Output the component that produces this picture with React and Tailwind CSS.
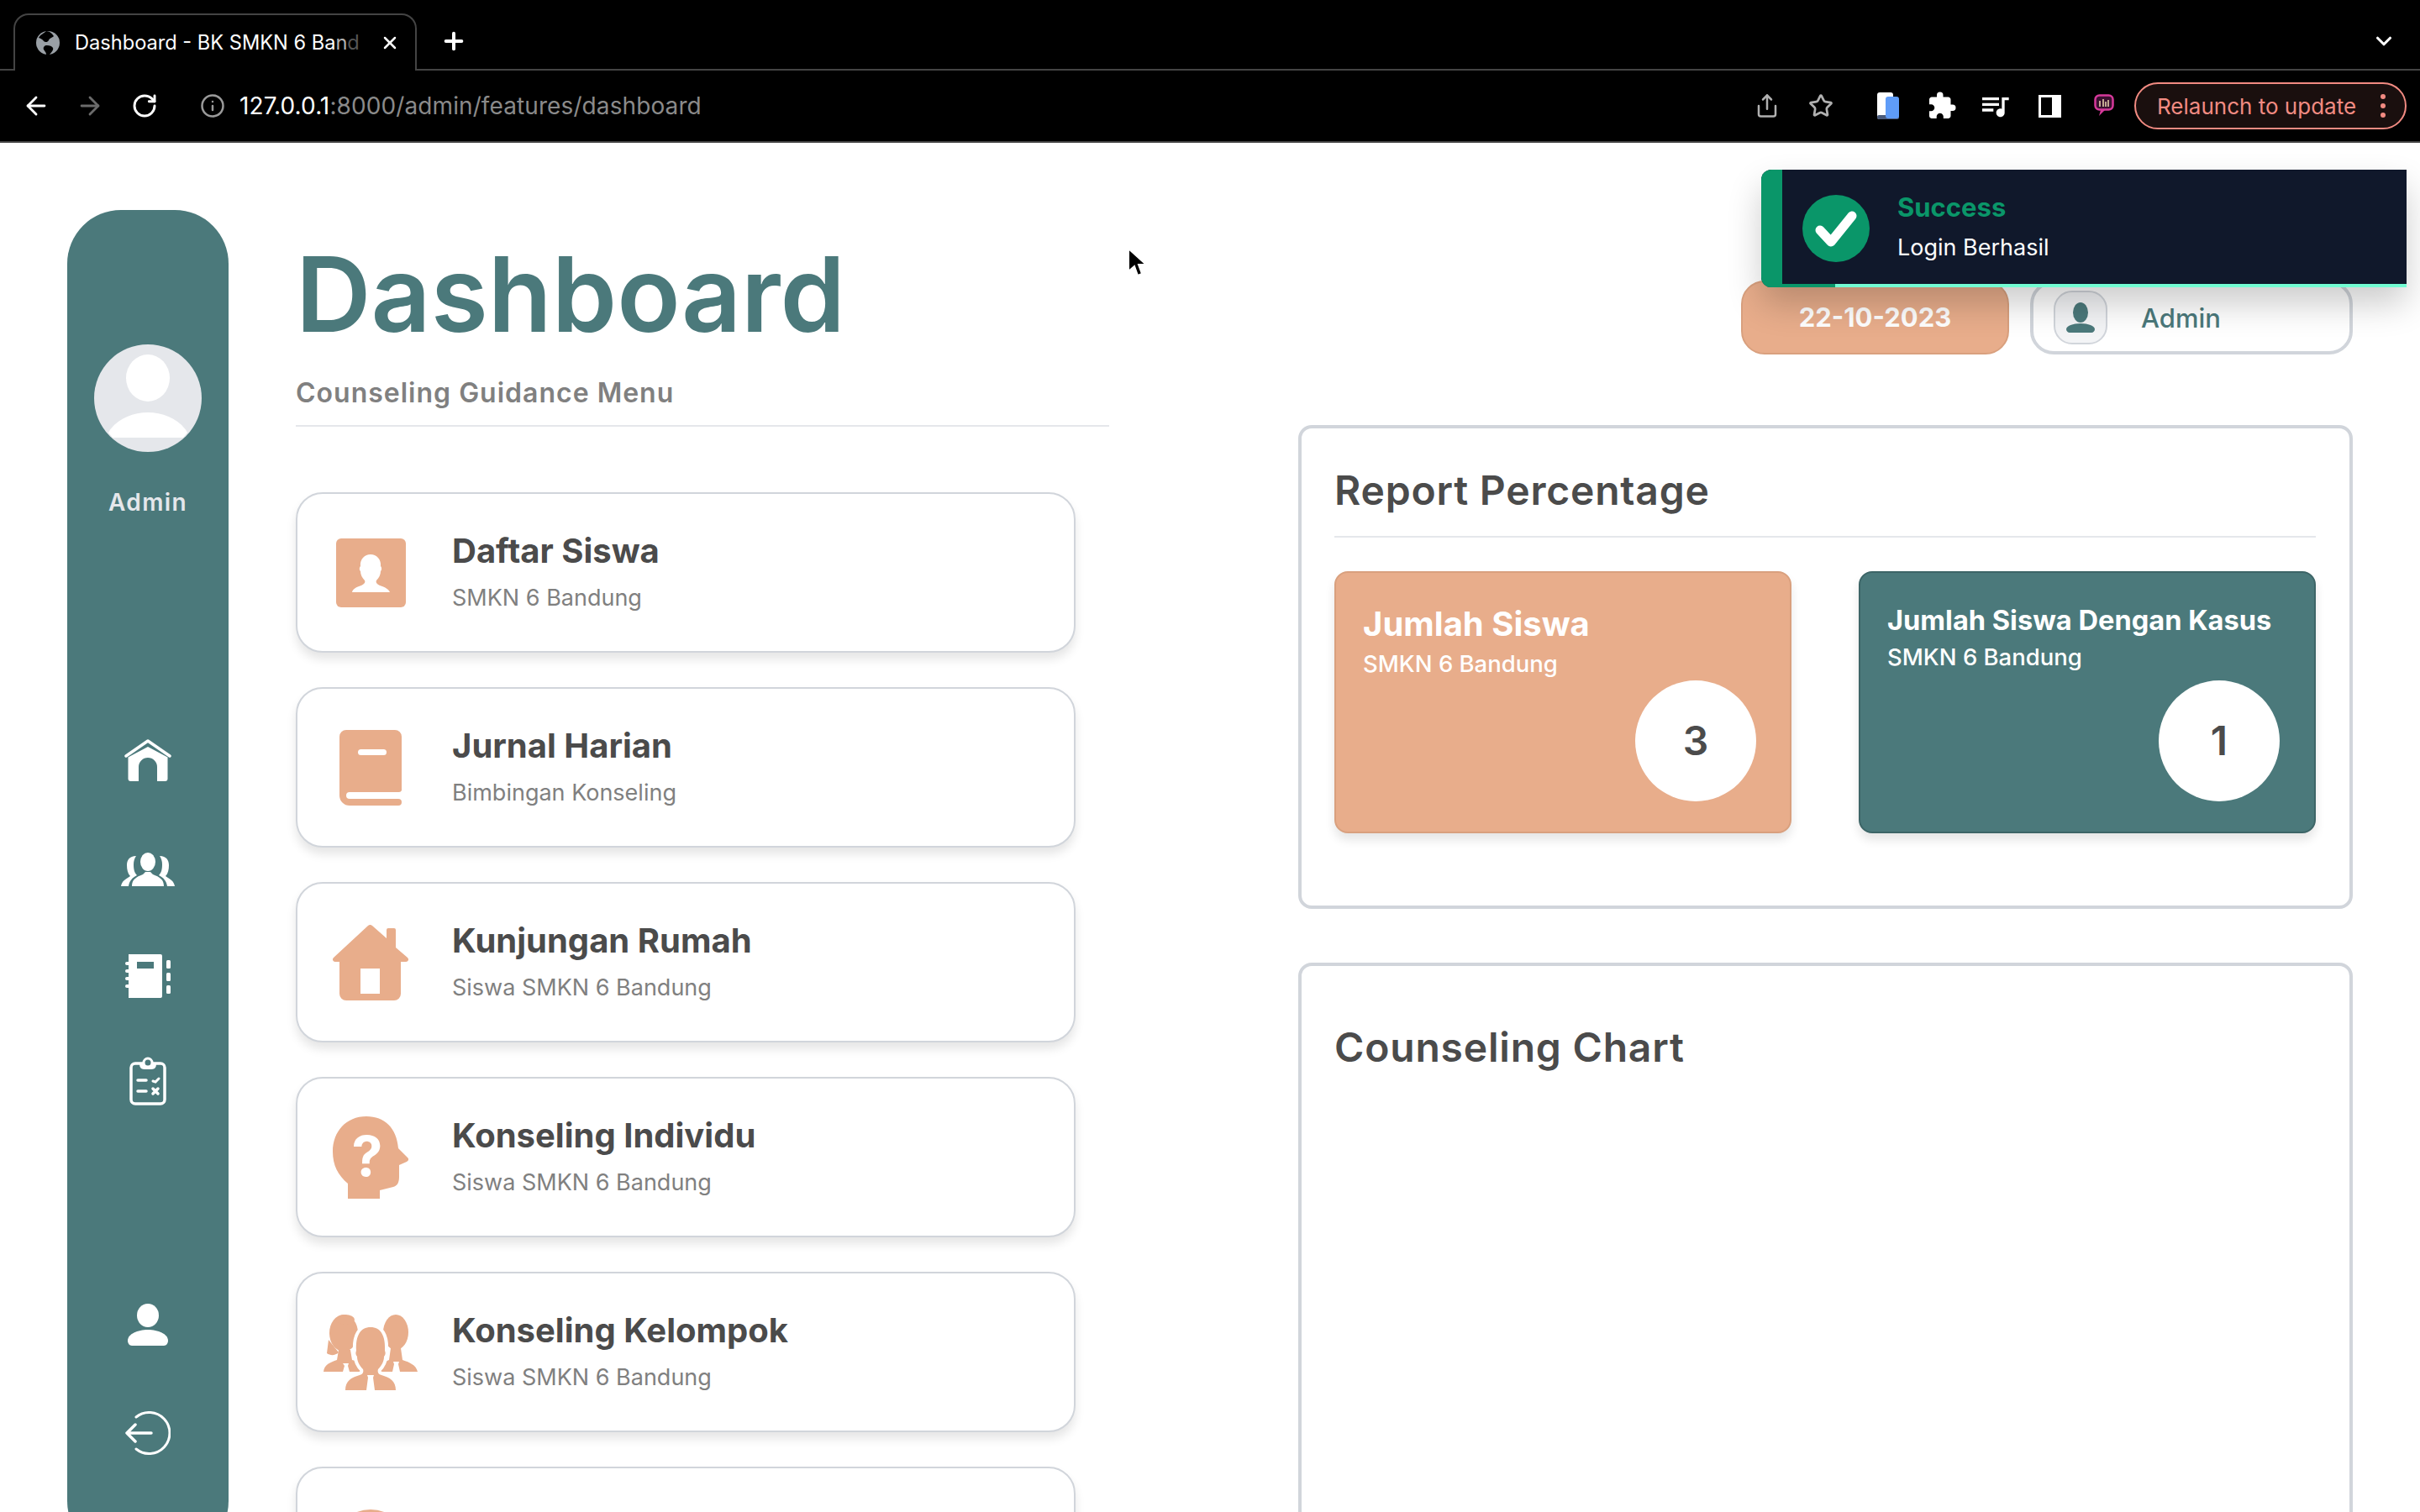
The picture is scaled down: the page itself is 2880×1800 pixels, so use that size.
import React from "react";
import { ArrowLeft, ArrowRight, RotateCw, Info, Star, Share, X, Plus, ChevronDown } from "lucide-react";
import { MdExtension, MdQueueMusic } from "react-icons/md";

const TEAL = "#4b797b";
const PEACH = "#e8ad8b";

// --- sidebar icons ---
const HomeIcon = () => (
  <svg width="56" height="50" viewBox="0 0 56 50" fill="white">
    <path d="M2 20 28 2l26 18" fill="none" stroke="white" strokeWidth="3.5" strokeLinecap="round" strokeLinejoin="round" />
    <path d="M4.500 21.500 28 9l23.500 12.500V47a3 3 0 0 1-3 3H39V33a11 11 0 0 0-22 0v17H7.500a3 3 0 0 1-3-3Z" />
  </svg>
);

const GroupIcon = () => (
  <svg width="64" height="40" viewBox="0 0 64 40" fill="white">
    <ellipse cx="32" cy="11" rx="9" ry="11" />
    <path d="M13 40c0-8 5-11 13-14l3-3h6l3 3c8 3 13 6 13 14Z" />
    <path d="M0 40c1-6 5-8 11-12-3-3-4-8-4-13 0-6 3-11 11-11-2 3-3 6-3 10 0 6 1 10 4 13-6 3-9 7-10 13Z" />
    <path d="M64 40c-1-6-5-8-11-12 3-3 4-8 4-13 0-6-3-11-11-11 2 3 3 6 3 10 0 6-1 10-4 13 6 3 9 7 10 13Z" />
  </svg>
);

const NotebookIcon = () => (
  <svg width="54" height="52" viewBox="0 0 54 52" fill="white">
    <path fillRule="evenodd" d="M4 0h38a2 2 0 0 1 2 2v48a2 2 0 0 1-2 2H4ZM14 9v8h20V9Z" />
    <rect x="0" y="9" width="7" height="4" rx="2" />
    <rect x="0" y="18" width="7" height="4" rx="2" />
    <rect x="0" y="27" width="7" height="4" rx="2" />
    <rect x="0" y="36" width="7" height="4" rx="2" />
    <rect x="49" y="7" width="5" height="10" rx="1.500" />
    <rect x="49" y="22" width="5" height="10" rx="1.500" />
    <rect x="49" y="37" width="5" height="10" rx="1.500" />
  </svg>
);

const ClipboardIcon = () => (
  <svg width="44" height="58" viewBox="0 0 44 58" fill="none" stroke="white" strokeLinecap="round">
    <rect x="2" y="8" width="40" height="48" rx="5" strokeWidth="3.500" />
    <path d="M13 9c0 4 3 5 5 5h8c2 0 5-1 5-5" fill="white" strokeWidth="2" />
    <circle cx="22" cy="7" r="5" fill={TEAL} strokeWidth="3" />
    <path d="M10 28h10M10 41h10" strokeWidth="3.500" />
    <path d="M28 29l3 1 4-4" strokeWidth="3" />
    <path d="M28 38l6 6M34 38l-6 6" strokeWidth="3.500" />
  </svg>
);

const UserIcon = () => (
  <svg width="48" height="50" viewBox="0 0 48 50" fill="white">
    <ellipse cx="24" cy="14" rx="13" ry="14" />
    <path d="M0 44c0-8 12-13 24-13s24 5 24 13c0 3-2 6-5 6H5c-3 0-5-3-5-6Z" />
  </svg>
);

const LogoutIcon = () => (
  <svg width="54" height="52" viewBox="0 0 54 52" fill="none" stroke="white" strokeLinecap="round" strokeLinejoin="round">
    <path d="M13 7A24.500 24.500 0 1 1 13 45" strokeWidth="3" />
    <path d="M31 26H2M12 16 2 26l10 10" strokeWidth="3.500" />
  </svg>
);

// --- card icons ---
const StudentIcon = () => (
  <svg width="83" height="82" viewBox="0 0 83 82">
    <rect width="83" height="82" rx="6" fill={PEACH} />
    <path fill="white" d="M19 64c1-4 5-6 11-8 4-2 5-4 4-6-3-3-5-7-5-11-2-2-1-5 0-6-1-8 5-14 12-14s13 6 12 14c1 1 2 4 0 6 0 4-2 8-5 11-1 2 0 4 4 6 6 2 10 4 12 8Z" />
  </svg>
);

const BookIcon = () => (
  <svg width="74" height="90" viewBox="0 0 74 90">
    <path fill={PEACH} d="M8 0h58a8 8 0 0 1 8 8v64a4 4 0 0 1-3 2H12a4 4 0 0 0 0 8h58a4 4 0 0 1 0 8H12A12 12 0 0 1 0 78V8a8 8 0 0 1 8-8Z" />
    <rect x="22" y="23" width="34" height="7" rx="3.500" fill="white" />
  </svg>
);

const HouseIcon = () => (
  <svg width="90" height="90" viewBox="0 0 90 90">
    <path fill={PEACH} fillRule="evenodd" d="M42 1a4 4 0 0 1 5 0l17 15V6a2 2 0 0 1 2-2h7a2 2 0 0 1 2 2v21l14 12c2 2 1 5-2 5h-6v38a8 8 0 0 1-8 8H16a8 8 0 0 1-8-8V44H3c-3 0-4-3-2-5ZM33 52v30h23V52Z" />
  </svg>
);

const HeadIcon = () => (
  <svg width="90" height="98" viewBox="0 0 90 98">
    <path fill={PEACH} d="M18 98V80C6 70 0 58 0 42 0 18 16 0 40 0c22 0 36 14 38 38l11 11c2 2 1 4-1 5l-9 4v14c0 8-3 11-7 12l-16 4v10Z" />
    <text x="41" y="71" textAnchor="middle" fill="white" fontFamily="Inter, sans-serif" fontWeight="700" fontSize="66">?</text>
  </svg>
);

const TeamIcon = () => (
  <svg width="112" height="90" viewBox="0 0 112 90">
    <g fill={PEACH}>
      {/* left person */}
      <ellipse cx="24" cy="22" rx="17" ry="22" />
      <ellipse cx="26" cy="6" rx="11" ry="6" />
      <path d="M6 30 4 46c4 3 10 3 14-1Z" />
      <path d="M0 68c1-9 8-11 16-14l2-12h14l2 12c8 2 12 5 14 14Z" />
      {/* right person */}
      <ellipse cx="86" cy="21" rx="15" ry="21" />
      <path d="M62 68c2-8 8-11 16-14l2-14h12l2 14c9 3 16 6 18 14Z" />
    </g>
    <path d="M23 58h7l-1 3 2 7h-8l2-7Z" fill="white" />
    <path d="M83 56h7l-1 3 2 9h-9l2-9Z" fill="white" />
    {/* center person, the white stroke cuts it out of the other two */}
    <path
      fill={PEACH}
      stroke="white"
      strokeWidth="8"
      paintOrder="stroke"
      strokeLinejoin="round"
      d="M26 90C26 79 33 75 43 72C47 71 48 68 47 65C43 61 40 56 40 50C38 48 38 45 39 43C38 25 44 15 56 15C68 15 74 25 73 43C74 45 74 48 72 50C72 56 69 61 65 65C64 68 65 71 69 72C79 75 86 79 86 90Z"
    />
    <path d="M52 72h8l-1 3 2 15H51l2-15Z" fill="white" />
  </svg>
);

const Blank = () => <div className="w-[90px] h-[90px] rounded-full bg-[#e8ad8b]" />;

const menu = [
  { title: "Daftar Siswa", sub: "SMKN 6 Bandung", icon: <StudentIcon /> },
  { title: "Jurnal Harian", sub: "Bimbingan Konseling", icon: <BookIcon /> },
  { title: "Kunjungan Rumah", sub: "Siswa SMKN 6 Bandung", icon: <HouseIcon /> },
  { title: "Konseling Individu", sub: "Siswa SMKN 6 Bandung", icon: <HeadIcon /> },
  { title: "Konseling Kelompok", sub: "Siswa SMKN 6 Bandung", icon: <TeamIcon /> },
  { title: "", sub: "", icon: <Blank /> },
];

const TabBar = () => (
  <div className="h-[84px] flex items-end bg-black border-b-2 border-[#444444] text-white">
    <div className="relative ml-[16px] -mb-[2px] w-[480px] h-[68px] flex items-center bg-black border-2 border-b-0 border-[#444444] rounded-t-[18px] pl-[24px] pr-[18px]">
      <svg width="30" height="30" viewBox="0 0 30 30" className="shrink-0">
        <circle cx="15" cy="15" r="14" fill="#9aa0a6" />
        <path fill="#000" d="M13 1c-3 3-7 4-9 8 3 1 5 2 6 4 2 2 5 1 6-1 1-3 4-3 6-5-2-3-5-6-9-6ZM14 18c-3 0-5 2-4 5 1 2 3 3 3 6l4 0c2-3 5-5 4-8-1-2-4-3-7-3Z" />
      </svg>
      <span className="ml-[17px] whitespace-nowrap text-[23.6px]">
        Dashboard - BK SMKN 6 Ba<span className="text-[#b0b0b0]">n</span><span className="text-[#555555]">d</span>
      </span>
      <X size={24} strokeWidth={2.500} className="ml-auto shrink-0" />
    </div>
    <div className="self-center ml-[28px] mt-[16px]">
      <Plus size={32} strokeWidth={3} />
    </div>
    <div className="self-center ml-auto mr-[28px] mt-[16px]">
      <ChevronDown size={30} strokeWidth={2.500} />
    </div>
  </div>
);

const ToolBar = () => (
  <div className="h-[86px] flex items-center bg-black border-b-2 border-[#444444] text-white">
    <ArrowLeft size={34} strokeWidth={2} className="ml-[26px]" />
    <ArrowRight size={34} strokeWidth={2} className="ml-[30px] text-[#6b6b6b]" />
    <RotateCw size={32} strokeWidth={2.200} className="ml-[32px]" />
    <Info size={30} strokeWidth={2} className="ml-[50px] text-[#9a9a9a]" />
    <div className="ml-[17px] text-[28px] tracking-[0.1px] whitespace-nowrap">
      127.0.0.1<span className="text-[#8a8a8a]">:8000/admin/features/dashboard</span>
    </div>
    <div className="ml-auto flex items-center">
      <Share size={30} strokeWidth={2} className="text-[#b0b0b0]" />
      <Star size={30} strokeWidth={2.200} className="ml-[34px] text-[#b0b0b0]" />
      <svg width="26" height="32" viewBox="0 0 26 32" className="ml-[52px]">
        <rect x="0" y="0" width="19" height="32" rx="3" fill="white" />
        <rect x="0" y="27" width="26" height="5" rx="2" fill="#4a5a7a" />
        <rect x="10" y="5" width="16" height="26" rx="3" fill="#5f9cf8" />
      </svg>
      <MdExtension size={36} className="ml-[33px]" />
      <MdQueueMusic size={40} className="ml-[25px]" />
      <div className="ml-[32px] w-[27px] h-[27px] border-y-[3px] border-l-[3px] border-r-[11px] border-white bg-black" />
      <svg width="24" height="28" viewBox="0 0 24 28" className="ml-[39px]">
        <rect x="1.500" y="1.500" width="21" height="17" rx="5" fill="#3a1030" stroke="#d6399a" strokeWidth="2.500" />
        <path d="M8 19l-2 7 7-7" fill="#d6399a" />
        <path d="M7 15V8M11 15V6M14 15V9M17 15V7" stroke="#f0d9b0" strokeWidth="1.500" />
      </svg>
      <div className="ml-[24px] mr-[16px] w-[324px] h-[56px] flex items-center rounded-full border-2 border-[#f28b82] bg-[#1a0f0e] pl-[25px] text-[#f28b82] text-[26px]">
        <span className="whitespace-nowrap">Relaunch to update</span>
        <div className="ml-auto mr-[23px] flex flex-col gap-[5px]">
          <div className="w-[6px] h-[6px] rounded-full bg-[#f28b82]" />
          <div className="w-[6px] h-[6px] rounded-full bg-[#f28b82]" />
          <div className="w-[6px] h-[6px] rounded-full bg-[#f28b82]" />
        </div>
      </div>
    </div>
  </div>
);

const Sidebar = () => (
  <aside className="ml-[80px] mt-[80px] w-[192px] h-[1601px] shrink-0 rounded-[64px] bg-[#4b797b] flex flex-col items-center pt-[160px]">
    <svg width="128" height="128" viewBox="0 0 128 128">
      <circle cx="64" cy="64" r="64" fill="#e5e7eb" />
      <ellipse cx="64" cy="40" rx="26" ry="28" fill="white" />
      <path fill="white" d="M17 105C25 90 45 81 64 81s39 9 47 24l-5 6H22Z" />
    </svg>
    <div className="mt-[42px] h-[36px] leading-[36px] text-[28px] font-semibold tracking-[1.4px] text-[#e5e7eb]">Admin</div>
    <div className="mt-[264px]"><HomeIcon /></div>
    <div className="mt-[85px]"><GroupIcon /></div>
    <div className="mt-[81px]"><NotebookIcon /></div>
    <div className="mt-[70px]"><ClipboardIcon /></div>
    <div className="mt-[236px]"><UserIcon /></div>
    <div className="mt-[78px]"><LogoutIcon /></div>
  </aside>
);

const MenuCard = ({ title, sub, icon }) => (
  <div className="w-[928px] h-[191px] shrink-0 flex items-center rounded-[32px] border-2 border-[#d1d5db] bg-white shadow-[0_8px_12px_rgba(0,0,0,0.1)] pl-[31px]">
    <div className="w-[112px] flex justify-center">{icon}</div>
    <div className="ml-[41px]">
      <div className="h-[50px] leading-[50px] text-[40px] font-bold text-[#4b4b4b]">{title}</div>
      <div className="mt-[11px] h-[40px] leading-[40px] text-[27px] text-[#808080]">{sub}</div>
    </div>
  </div>
);

const StatCard = ({ bg, titleCls, subCls, title, sub, value, circleCls }) => (
  <div className={bg}>
    <div className={titleCls}>{title}</div>
    <div className={subCls}>{sub}</div>
    <div className={circleCls}>{value}</div>
  </div>
);

export default function App() {
  return (
    <div className="relative w-[2880px] h-[1800px] overflow-hidden bg-white font-['Inter',sans-serif]">
      <TabBar />
      <ToolBar />

      <main className="flex">
        <Sidebar />

        <section className="ml-[80px] w-[968px] shrink-0 pt-[118px]">
          <h1 className="h-[124px] leading-[124px] text-[124px] font-semibold text-[#4b797b] whitespace-nowrap">Dashboard</h1>
          <div className="mt-[36px] h-[40px] leading-[40px] text-[32px] font-semibold tracking-[1px] text-[#808080]">Counseling Guidance Menu</div>
          <div className="mt-[18px] h-[2px] bg-[#e5e7eb]" />
          <div className="mt-[78px] flex flex-col gap-[41px]">
            {menu.map((m, i) => (
              <MenuCard key={i} {...m} />
            ))}
          </div>
        </section>

        <section className="ml-[225px] w-[1255px] shrink-0 pt-[164px]">
          <div className="flex justify-end gap-[25px]">
            <div className="w-[319px] h-[88px] flex items-center justify-center rounded-[28px] border-2 border-[#d9a07e] bg-[#e8ad8b] text-[31px] font-bold text-white">22-10-2023</div>
            <div className="w-[384px] h-[88px] flex items-center rounded-[28px] border-4 border-[#d1d5db] bg-white pl-[24px]">
              <div className="w-[64px] h-[64px] flex items-center justify-center rounded-[22px] border-2 border-[#d1d5db] bg-[#f3f4f6]">
                <svg width="34" height="36" viewBox="0 0 34 36" fill="#4b797b">
                  <ellipse cx="17" cy="12" rx="9" ry="12" />
                  <path d="M0 32c0-4 8-7 17-7s17 3 17 7c0 2-2 4-4 4H4c-2 0-4-2-4-4Z" />
                </svg>
              </div>
              <div className="ml-[40px] pt-[2px] text-[31px] font-medium text-[#4b797b]">Admin</div>
            </div>
          </div>

          <div className="mt-[84px] h-[576px] rounded-[16px] border-4 border-[#d1d5db] pl-[39px] pr-[40px] pt-[44px]">
            <div className="h-[60px] leading-[60px] text-[48px] font-semibold tracking-[0.8px] text-[#4b4b4b]">Report Percentage</div>
            <div className="mt-[24px] h-[2px] bg-[#e5e7eb]" />
            <div className="mt-[40px] grid grid-cols-[544px_544px] gap-x-[80px]">
              <StatCard
                bg="h-[312px] flex flex-col rounded-[16px] border-2 border-[#d9a07e] bg-[#e8ad8b] pt-[36px] pl-[32px] text-white shadow-[0_8px_12px_rgba(0,0,0,0.1)]"
                titleCls="pt-[1px] h-[48px] leading-[48px] text-[40px] font-bold"
                subCls="mt-[6px] h-[36px] leading-[36px] text-[27.5px] font-medium"
                circleCls="mt-[2px] mr-[40px] self-end w-[144px] h-[144px] flex items-center justify-center rounded-full bg-white text-[48px] font-semibold text-[#4b4b4b]"
                title="Jumlah Siswa"
                sub="SMKN 6 Bandung"
                value="3"
              />
              <StatCard
                bg="h-[312px] flex flex-col rounded-[16px] border-2 border-[#3d6567] bg-[#4b797b] pt-[34px] pl-[32px] text-white shadow-[0_8px_12px_rgba(0,0,0,0.1)]"
                titleCls="h-[44px] leading-[44px] text-[32.6px] font-bold whitespace-nowrap"
                subCls="mt-[4px] h-[36px] leading-[36px] text-[27.5px] font-medium"
                circleCls="mt-[10px] mr-[41px] self-end w-[144px] h-[144px] flex items-center justify-center rounded-full bg-white text-[48px] font-semibold text-[#4b4b4b]"
                title="Jumlah Siswa Dengan Kasus"
                sub="SMKN 6 Bandung"
                value="1"
              />
            </div>
          </div>

          <div className="mt-[64px] h-[800px] rounded-[16px] border-4 border-[#d1d5db] px-[39px] pt-[67px]">
            <div className="h-[60px] leading-[60px] text-[48px] font-semibold tracking-[0.8px] text-[#4b4b4b]">Counseling Chart</div>
          </div>
        </section>
      </main>

      {/* toast */}
      <div className="absolute left-[2096px] top-[202px] w-[768px] h-[140px] overflow-hidden rounded-l-[12px] bg-[#10182b] flex items-center shadow-[0_20px_40px_rgba(0,0,0,0.2)]">
        <div className="absolute left-0 top-0 bottom-0 w-[25px] bg-[#0a9669]" />
        <div className="absolute left-0 bottom-0 h-[4px] w-[88px] bg-[#0a9669]" />
        <div className="absolute left-[88px] right-0 bottom-0 h-[4px] bg-[#72fbd2]" />
        <div className="ml-[49px] w-[80px] h-[80px] flex items-center justify-center rounded-full bg-[#0a9669]">
          <svg width="52" height="44" viewBox="0 0 52 44" fill="none" stroke="white" strokeWidth="11" strokeLinecap="round" strokeLinejoin="round">
            <path d="M7 24l13 14L45 7" />
          </svg>
        </div>
        <div className="ml-[33px] -mt-[2px]">
          <div className="h-[40px] leading-[40px] text-[31px] font-bold text-[#0a9669]">Success</div>
          <div className="mt-[8px] h-[40px] leading-[40px] text-[27px] text-white">Login Berhasil</div>
        </div>
      </div>

      {/* mouse cursor */}
      <svg width="26" height="38" viewBox="0 0 26 38" className="absolute left-[1341px] top-[294px]">
        <path d="M2 2v27l7-6 4 11 5-2-4-11h9Z" fill="black" stroke="white" strokeWidth="2" />
      </svg>
    </div>
  );
}
